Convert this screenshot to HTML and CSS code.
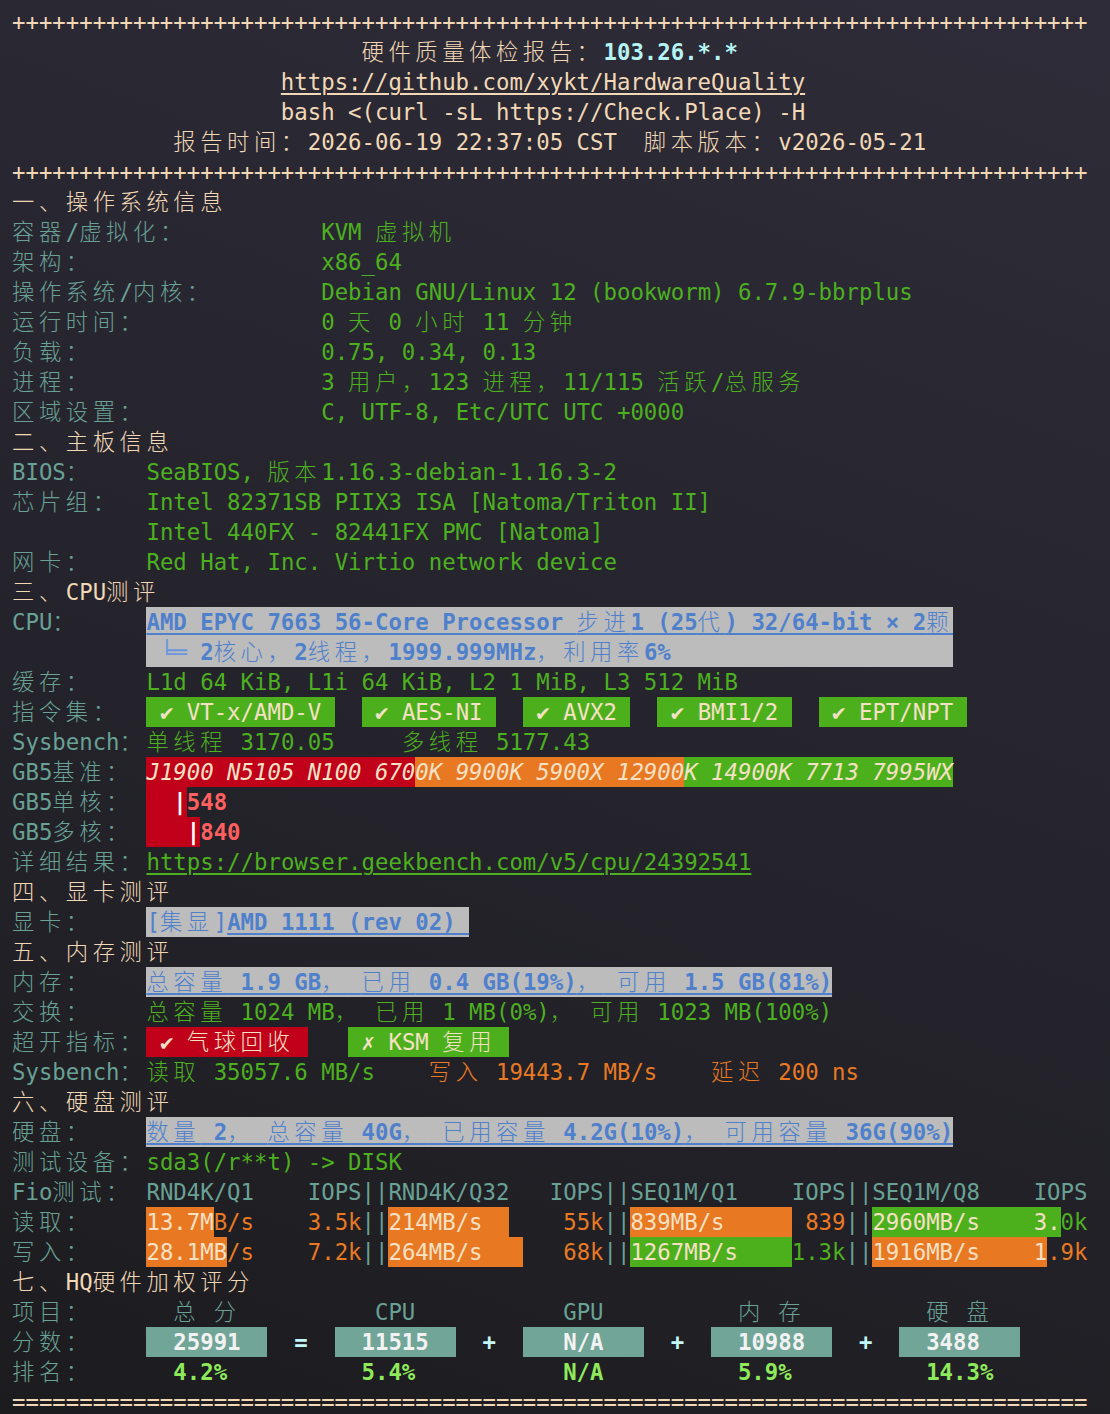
FILE: index.html
```html
<!DOCTYPE html>
<html lang="zh-CN">
<head>
<meta charset="utf-8">
<title>硬件质量体检报告</title>
<link rel="stylesheet" href="styles.css">
</head>
<body>
<main class="term">
<div class="ln">++++++++++++++++++++++++++++++++++++++++++++++++++++++++++++++++++++++++++++++++</div>
<div class="ln">                          <span class="w">硬件质量体检报告：</span><b class="ip">103.26.*.*</b></div>
<div class="ln">                    <span class="u">https://github.com/xykt/HardwareQuality</span></div>
<div class="ln">                    bash &lt;(curl -sL https://Check.Place) -H</div>
<div class="ln">            <span class="w">报告时间：</span>2026-06-19 22:37:05 CST  <span class="w">脚本版本：</span>v2026-05-21</div>
<div class="ln">++++++++++++++++++++++++++++++++++++++++++++++++++++++++++++++++++++++++++++++++</div>
<div class="ln"><span class="w">一、操作系统信息</span></div>
<div class="ln"><span class="lb"><span class="w">容器</span>/<span class="w">虚拟化：</span></span>          <span class="g">KVM <span class="w">虚拟机</span></span></div>
<div class="ln"><span class="lb w">架构：</span>                 <span class="g">x86_64</span></div>
<div class="ln"><span class="lb"><span class="w">操作系统</span>/<span class="w">内核：</span></span>        <span class="g">Debian GNU/Linux 12 (bookworm) 6.7.9-bbrplus</span></div>
<div class="ln"><span class="lb w">运行时间：</span>             <span class="g">0 <span class="w">天</span> 0 <span class="w">小时</span> 11 <span class="w">分钟</span></span></div>
<div class="ln"><span class="lb w">负载：</span>                 <span class="g">0.75, 0.34, 0.13</span></div>
<div class="ln"><span class="lb w">进程：</span>                 <span class="g">3 <span class="w">用户，</span>123 <span class="w">进程，</span>11/115 <span class="w">活跃</span>/<span class="w">总服务</span></span></div>
<div class="ln"><span class="lb w">区域设置：</span>             <span class="g">C, UTF-8, Etc/UTC UTC +0000</span></div>
<div class="ln"><span class="w">二、主板信息</span></div>
<div class="ln"><span class="lb">BIOS<span class="w">：</span></span>    <span class="g">SeaBIOS, <span class="w">版本</span>1.16.3-debian-1.16.3-2</span></div>
<div class="ln"><span class="lb w">芯片组：</span>  <span class="g">Intel 82371SB PIIX3 ISA [Natoma/Triton II]</span></div>
<div class="ln">          <span class="g">Intel 440FX - 82441FX PMC [Natoma]</span></div>
<div class="ln"><span class="lb w">网卡：</span>    <span class="g">Red Hat, Inc. Virtio network device</span></div>
<div class="ln"><span class="w">三、</span>CPU<span class="w">测评</span></div>
<div class="ln"><span class="lb">CPU<span class="w">：</span></span>     <span class="bx gy u">AMD EPYC 7663 56-Core Processor <span class="w">步进</span>1 (25<span class="w">代</span>) 32/64-bit × 2<span class="w">颗</span></span></div>
<div class="ln">          <span class="bx gy"><span class="tr"> ╘═ </span>2<span class="w">核心，</span>2<span class="w">线程，</span>1999.999MHz<span class="w">，利用率</span>6%                     </span></div>
<div class="ln"><span class="lb w">缓存：</span>    <span class="g">L1d 64 KiB, L1i 64 KiB, L2 1 MiB, L3 512 MiB</span></div>
<div class="ln"><span class="lb w">指令集：</span>  <span class="bx gn"> <span class="ck">✔</span> VT-x/AMD-V </span>  <span class="bx gn"> <span class="ck">✔</span> AES-NI </span>  <span class="bx gn"> <span class="ck">✔</span> AVX2 </span>  <span class="bx gn"> <span class="ck">✔</span> BMI1/2 </span>  <span class="bx gn"> <span class="ck">✔</span> EPT/NPT </span></div>
<div class="ln"><span class="lb">Sysbench<span class="w">：</span></span><span class="g"><span class="w">单线程</span> 3170.05     <span class="w">多线程</span> 5177.43</span></div>
<div class="ln"><span class="lb">GB5<span class="w">基准：</span></span> <span class="bx rd it">J1900 N5105 N100 670</span><span class="bx or it">0K 9900K 5900X 12900</span><span class="bx gn it">K 14900K 7713 7995WX</span></div>
<div class="ln"><span class="lb">GB5<span class="w">单核：</span></span> <span class="bx rd">  <b class="bar">|</b></span><b class="sal">548</b></div>
<div class="ln"><span class="lb">GB5<span class="w">多核：</span></span> <span class="bx rd">   <b class="bar">|</b></span><b class="sal">840</b></div>
<div class="ln"><span class="lb w">详细结果：</span><span class="g u">https://browser.geekbench.com/v5/cpu/24392541</span></div>
<div class="ln"><span class="w">四、显卡测评</span></div>
<div class="ln"><span class="lb w">显卡：</span>    <span class="bx gy"><span class="nb">[<span class="w">集显</span>]</span><span class="u">AMD 1111 (rev 02) </span></span></div>
<div class="ln"><span class="w">五、内存测评</span></div>
<div class="ln"><span class="lb w">内存：</span>    <span class="bx gy u"><span class="w">总容量</span> 1.9 GB<span class="w">，</span> <span class="w">已用</span> 0.4 GB(19%)<span class="w">，</span> <span class="w">可用</span> 1.5 GB(81%)</span></div>
<div class="ln"><span class="lb w">交换：</span>    <span class="g"><span class="w">总容量</span> 1024 MB<span class="w">，</span> <span class="w">已用</span> 1 MB(0%)<span class="w">，</span> <span class="w">可用</span> 1023 MB(100%)</span></div>
<div class="ln"><span class="lb w">超开指标：</span><span class="bx rd"> <span class="ck">✔</span> <span class="w">气球回收</span> </span>   <span class="bx gn"> <span class="ck xk">✗</span> KSM <span class="w">复用</span> </span></div>
<div class="ln"><span class="lb">Sysbench<span class="w">：</span></span><span class="g"><span class="w">读取</span> 35057.6 MB/s</span>    <span class="o"><span class="w">写入</span> 19443.7 MB/s    <span class="w">延迟</span> 200 ns</span></div>
<div class="ln"><span class="w">六、硬盘测评</span></div>
<div class="ln"><span class="lb w">硬盘：</span>    <span class="bx gy u"><span class="w">数量</span> 2<span class="w">，</span> <span class="w">总容量</span> 40G<span class="w">，</span> <span class="w">已用容量</span> 4.2G(10%)<span class="w">，</span> <span class="w">可用容量</span> 36G(90%)</span></div>
<div class="ln"><span class="lb w">测试设备：</span><span class="g">sda3(/r**t) -&gt; DISK</span></div>
<div class="ln"><span class="lb">Fio<span class="w">测试：</span> RND4K/Q1    IOPS||RND4K/Q32   IOPS||SEQ1M/Q1    IOPS||SEQ1M/Q8    IOPS</span></div>
<div class="ln"><span class="lb w">读取：</span>    <span class="bx or">13.7M</span><span class="o">B/s    3.5k</span><span class="lb">||</span><span class="bx or">214MB/s  </span><span class="o">    55k</span><span class="lb">||</span><span class="bx or">839MB/s     </span><span class="o"> 839</span><span class="lb">||</span><span class="bx gn">2960MB/s    3.</span><span class="g">0k</span></div>
<div class="ln"><span class="lb w">写入：</span>    <span class="bx or">28.1MB</span><span class="o">/s    7.2k</span><span class="lb">||</span><span class="bx or">264MB/s   </span><span class="o">   68k</span><span class="lb">||</span><span class="bx gn">1267MB/s    </span><span class="g">1.3k</span><span class="lb">||</span><span class="bx or">1916MB/s    1</span><span class="o">.9k</span></div>
<div class="ln"><span class="w">七、</span>HQ<span class="w">硬件加权评分</span></div>
<div class="ln"><span class="lb"><span class="w">项目：</span>      <span class="w">总</span> <span class="w">分</span>          CPU           GPU          <span class="w">内</span> <span class="w">存</span>         <span class="w">硬</span> <span class="w">盘</span></span></div>
<div class="ln"><span class="lb w">分数：</span>    <b class="bx sc">  25991  </b><b class="op">  =  </b><b class="bx sc">  11515  </b><b class="op">  +  </b><b class="bx sc">   N/A   </b><b class="op">  +  </b><b class="bx sc">  10988  </b><b class="op">  +  </b><b class="bx sc">  3488   </b></div>
<div class="ln"><span class="lb w">排名：</span>    <b class="rk">  4.2%          5.4%           N/A          5.9%          14.3%</b></div>
<div class="ln">================================================================================</div>
</main>
</body>
</html>
```

FILE: styles.css
```css
html, body {
  margin: 0;
  padding: 0;
}

body {
  min-height: 100vh;
  background: #232229 linear-gradient(200deg, #2d2c38 0%, #26252e 45%, #1c1c1f 100%);
}

.term {
  padding: 7px 12px 0;
  font-family: "DejaVu Sans Mono", "Noto Sans CJK SC", monospace;
  font-size: 22.34px;
  color: #f2d8b6;
}

.ln {
  height: 30px;
  line-height: 30px;
  white-space: pre;
}

.w {
  letter-spacing: 4.56px;
  font-weight: 300;
}

.lb {
  color: #69a195;
}

.g {
  color: #4db01f;
}

.o {
  color: #e97a23;
}

.ip {
  color: #b6f3f3;
}

.u {
  text-decoration: underline;
  text-decoration-thickness: 2px;
  text-underline-offset: 3px;
}

.bx {
  display: inline-block;
  vertical-align: top;
  height: 30px;
}

.gy {
  background: #bcbcbc;
  color: #4f80cc;
  font-weight: 700;
}

.gy .w,
.gy .nb {
  font-weight: 300;
}

.tr {
  font-weight: 400;
  color: #6a96de;
}

.gn {
  background: #4cb01d;
  color: #f6e1c5;
}

.rd {
  background: #c1001a;
  color: #f6e1c5;
}

.or {
  background: #e87822;
  color: #f6e1c5;
}

.it {
  font-style: italic;
}

.ck {
  display: inline-block;
  width: 1ch;
  text-align: center;
  font-weight: 400;
}

.xk {
  font-weight: 700;
}

.bar {
  color: #ffffff;
}

.sal {
  color: #ff5f5f;
}

.sc {
  background: #70a597;
  color: #f2f2f2;
}

.op {
  color: #c3f7f7;
}

.rk {
  color: #8fea5b;
}
```
